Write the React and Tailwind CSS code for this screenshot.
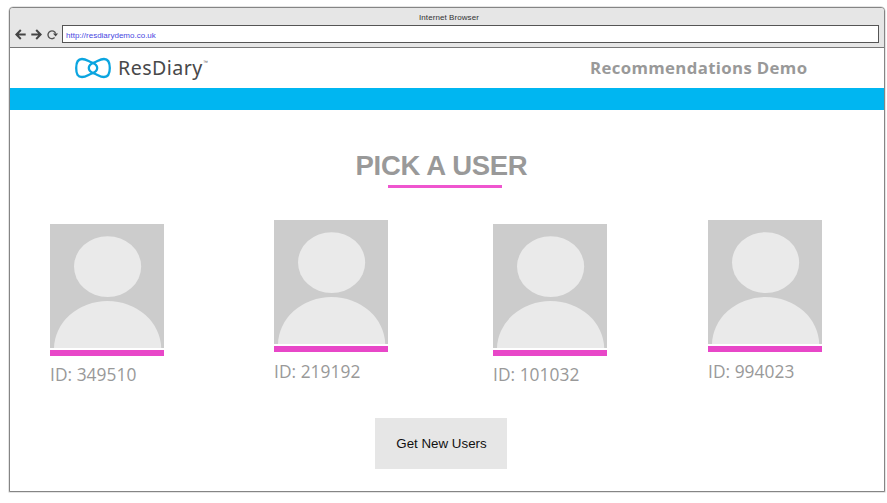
import React from "react";

const users = [
  { id: "349510", place: "ml-[40px] mt-[4px]", bar: "mt-[1.5px]", label: "mt-[6px]" },
  { id: "219192", place: "ml-[110px]", bar: "mt-[2px]", label: "mt-[6.5px]" },
  { id: "101032", place: "ml-[105px] mt-[4px]", bar: "mt-[1.5px]", label: "mt-[6px]" },
  { id: "994023", place: "ml-[101px]", bar: "mt-[2px]", label: "mt-[6.5px]" },
];

function Arrow({ flip }) {
  return (
    <svg width="11" height="11" viewBox="0 0 11 11" fill="none" stroke="#444" strokeWidth="2" className={flip ? "-scale-x-100" : ""}>
      <path d="M0.3 5.5H9.5M5.2 1L9.7 5.5L5.2 10" />
    </svg>
  );
}

function Reload() {
  return (
    <svg width="11" height="11" viewBox="0 0 11 11" fill="none">
      <path d="M7.6 8.6A3.9 3.9 0 1 1 8.6 4.5" stroke="#555" strokeWidth="1.4" />
      <path d="M6 4.4H11L8.6 7.6Z" fill="#444" />
    </svg>
  );
}

function Logo() {
  return (
    <svg width="38" height="22" viewBox="0 0 38 22" fill="none" stroke="#0ba5e0" strokeWidth="2.3">
      <path d="M2.2 11C2.2 4.6 3.8 2 8 2C12 2 14.5 4.4 18 5.6C21.5 6.8 23.2 8.4 23.2 11C23.2 13.6 21.5 15.2 18 16.4C14.5 17.6 12 20 8 20C3.8 20 2.2 17.4 2.2 11Z" />
      <path d="M35.8 11C35.8 4.6 34.2 2 30 2C26 2 23.5 4.4 20 5.6C16.5 6.8 14.8 8.4 14.8 11C14.8 13.6 16.5 15.2 20 16.4C23.5 17.6 26 20 30 20C34.2 20 35.8 17.4 35.8 11Z" />
    </svg>
  );
}

function User({ user }) {
  return (
    <div className={`w-[114px] shrink-0 ${user.place}`}>
      <svg className="block" width="114" height="124" viewBox="0 0 114 124">
        <rect width="114" height="124" fill="#ccc" />
        <ellipse cx="57.6" cy="42.6" rx="33.6" ry="30.4" fill="#eaeaea" />
        <ellipse cx="57.6" cy="125" rx="53.6" ry="48" fill="#eaeaea" />
      </svg>
      <div className={`h-[6px] bg-[#e847c8] ${user.bar}`} />
      <div className={`font-['Open_Sans',sans-serif] text-[17.33px] leading-[24px] tracking-[0.04px] whitespace-nowrap text-[#999] ${user.label}`}>ID: {user.id}</div>
    </div>
  );
}

export default function App() {
  return (
    <div className="h-[503px] w-[887px] overflow-hidden bg-white pt-[7px] pl-[9px] font-['Liberation_Sans',Arial,sans-serif]">
      <div className="flex h-[485px] w-[876px] flex-col rounded-t-[4px] border border-[#858585] bg-white shadow-[0_0_0_0.5px_#ccc]">
        <header className="h-[40px] shrink-0 rounded-t-[3px] border-b border-[#777] bg-[#e6e6e6]">
          <div className="flex h-[17px] items-center justify-center pt-[2px] pl-[4px] text-[8px] tracking-[0.08px] text-[#333]">Internet Browser</div>
          <div className="flex items-center pl-[5px]">
            <Arrow flip />
            <div className="w-[5px]" />
            <Arrow />
            <div className="w-[5px]" />
            <Reload />
            <div className="ml-[4px] flex h-[18px] w-[817px] items-center border border-[#555] bg-white pt-[3px] pl-[3px] text-[8px] text-[#4747df]">http://resdiarydemo.co.uk</div>
          </div>
        </header>
        <div className="flex h-[40px] shrink-0 items-center pl-[64px]">
          <Logo />
          <div className="ml-[6px] w-[85px] font-['Noto_Sans',sans-serif] text-[19.6px] leading-[24px] tracking-[0.45px] whitespace-nowrap text-[#484849]">ResDiary</div>
          <div className="-mt-[10px] w-[7px] text-[5px] text-[#555]">™</div>
          <div className="ml-[380px] font-['Open_Sans',sans-serif] text-[16.8px] leading-[24px] font-bold tracking-[0.35px] whitespace-nowrap text-[#999]">Recommendations Demo</div>
        </div>
        <div className="h-[22px] shrink-0 bg-[#00b6f1]" />
        <main className="flex flex-col">
          <h1 className="mt-[41px] ml-[345.5px] h-[30px] text-[27.5px] leading-[30px] font-bold tracking-[-0.3px] whitespace-nowrap text-[#999]">PICK A USER</h1>
          <div className="mt-[4px] ml-[378px] h-[3px] w-[114px] bg-[#ef55cf]" />
          <div className="mt-[32px] flex h-[198px] items-start">
            {users.map((user) => <User key={user.id} user={user} />)}
          </div>
          <button className="ml-[365px] h-[51px] w-[132px] bg-[#e6e6e6] pl-[1px] text-[13.33px] text-[#111]">Get New Users</button>
        </main>
      </div>
    </div>
  );
}
